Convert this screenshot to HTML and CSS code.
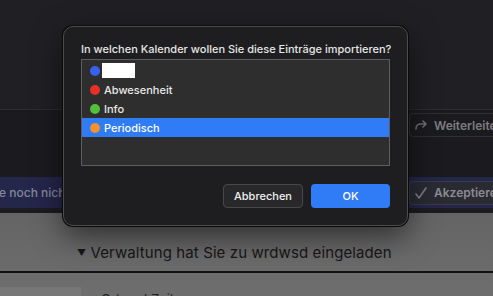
FILE: index.html
```html
<!DOCTYPE html>
<html>
<head>
    <meta charset="UTF-8">
    <title>Kalender importieren</title>
    <link rel="stylesheet" href="styles.css">
</head>
<body>
    <div class="app">
        <div class="top"></div>
        <div class="toolbar">
            <div class="tool-btn">
                <svg width="12" height="10" viewBox="0 0 12 10"><path d="M1 9 C1 5 3 4 6 4 H11 M8 1 L11 4 L8 7" fill="none" stroke="#6e6e72" stroke-width="1.6" stroke-linecap="round" stroke-linejoin="round"/></svg>
                <span>Weiterleiten</span>
            </div>
        </div>
        <div class="banner">
            <span class="banner-text">e noch nicht beantwortet</span>
            <div class="tool-btn accept">
                <svg width="12" height="12" viewBox="0 0 12 12"><path d="M1 7 L4 11 L11 1" fill="none" stroke="#7e7e84" stroke-width="1.6" stroke-linecap="round" stroke-linejoin="round"/></svg>
                <span>Akzeptieren</span>
            </div>
        </div>
        <div class="spacer"></div>
        <div class="content">
            <h2 class="invite"><span class="tri">▼</span> Verwaltung hat Sie zu wrdwsd eingeladen</h2>
            <div class="rule"></div>
            <div class="details">
                <div class="tab"></div>
                <span class="detail-text">Ort und Zeit</span>
            </div>
        </div>
    </div>

    <div class="dialog">
        <div class="title">In welchen Kalender wollen Sie diese Einträge importieren?</div>
        <div class="list">
            <div class="row"><span class="dot blue"></span><span class="redacted"></span></div>
            <div class="row"><span class="dot red"></span>Abwesenheit</div>
            <div class="row"><span class="dot green"></span>Info</div>
            <div class="row selected"><span class="dot orange"></span>Periodisch</div>
        </div>
        <div class="buttons">
            <div class="btn cancel">Abbrechen</div>
            <div class="btn ok">OK</div>
        </div>
    </div>
</body>
</html>
```

FILE: styles.css
```css
body {
    margin: 0;
    width: 493px;
    height: 296px;
    overflow: hidden;
    font-family: Inter, "Liberation Sans", sans-serif;
    background: #1c1c20;
}
.app {
    display: flex;
    flex-direction: column;
    height: 296px;
}
.app > div {
    flex-shrink: 0;
}
.top {
    height: 109px;
    background: #202024;
    border-bottom: 1px solid #2c2c30;
}
.toolbar {
    height: 67px;
    background: #1b1b1f;
    display: flex;
    justify-content: flex-end;
    align-items: flex-start;
    overflow: hidden;
}
.tool-btn {
    display: flex;
    align-items: center;
    gap: 7px;
    flex-shrink: 0;
    width: 78px;
    height: 22px;
    margin-top: 3px;
    padding-left: 5px;
    border: 1px solid #2f2f33;
    border-right: none;
    border-radius: 4px 0 0 4px;
    color: #7c7c80;
    font-size: 12px;
    font-weight: 600;
    white-space: nowrap;
}
.tool-btn svg {
    flex-shrink: 0;
}
.banner {
    height: 31px;
    background: #24264a;
    display: flex;
    justify-content: space-between;
    align-items: center;
    overflow: hidden;
}
.banner-text {
    margin-left: -1px;
    color: #85879e;
    font-size: 12px;
    font-weight: 500;
    white-space: nowrap;
}
.tool-btn.accept {
    margin-top: 0;
    height: 22px;
    background: #2a2a33;
    border-color: #3a3a48;
    color: #8a8a90;
}
.spacer {
    height: 5px;
    background: #1c1c20;
}
.app > .content {
    flex: 1;
    flex-shrink: 1;
    min-height: 0;
    overflow: hidden;
    background: linear-gradient(#646464, #6e6e6e);
}
.invite {
    margin: 0;
    padding: 30px 0 0 77px;
    height: 28px;
    font-size: 15px;
    font-weight: 400;
    color: #161616;
    letter-spacing: 0.1px;
    white-space: nowrap;
}
.tri {
    font-size: 9px;
    position: relative;
    top: -2px;
}
.rule {
    height: 2px;
    background: #111;
}
.details {
    display: flex;
    margin-top: 14px;
    gap: 20px;
}
.tab {
    width: 81px;
    height: 12px;
    background: #777;
}
.detail-text {
    color: #222;
    font-size: 13px;
    margin-top: 4px;
}

.dialog {
    position: absolute;
    left: 63px;
    top: 26px;
    width: 309px;
    height: 198px;
    background: #1e1e20;
    border: 1px solid #4c4c4e;
    border-radius: 10px;
    box-shadow: 0 0 0 1px #0a0a0a, 0 10px 30px rgba(0, 0, 0, 0.55);
    padding: 0 17px;
}
.title {
    margin-top: 14px;
    color: #e6e6e6;
    font-size: 11px;
    font-weight: 500;
    line-height: 16px;
    white-space: nowrap;
}
.list {
    margin-top: 2px;
    width: 307px;
    height: 105px;
    background: #2e2e2e;
    border: 1px solid #5e5e60;
    padding-top: 0;
}
.row {
    display: flex;
    align-items: center;
    height: 19px;
    padding-left: 8px;
    gap: 4px;
    color: #e8e8e8;
    font-size: 11px;
    font-weight: 500;
}
.row:first-child {
    margin-top: 1px;
}
.row.selected {
    background: #2f7cf6;
    color: #fff;
}
.dot {
    width: 10px;
    height: 10px;
    border-radius: 50%;
}
.dot.blue { background: #3563ef; }
.dot.red { background: #e8302a; }
.dot.green { background: #52c03a; }
.dot.orange { background: #f5922f; }
.redacted {
    width: 33px;
    height: 15px;
    background: #fff;
    margin-left: -2px;
}
.buttons {
    display: flex;
    justify-content: flex-end;
    gap: 8px;
    margin-top: 18px;
    width: 309px;
}
.btn {
    height: 24px;
    display: flex;
    align-items: center;
    justify-content: center;
    border-radius: 4px;
    font-size: 11px;
    font-weight: 500;
    color: #f0f0f0;
    box-sizing: border-box;
}
.btn.cancel {
    width: 80px;
    background: #28282a;
    border: 1px solid #48484a;
}
.btn.ok {
    width: 79px;
    background: #2f7cf6;
    color: #fff;
}
```
